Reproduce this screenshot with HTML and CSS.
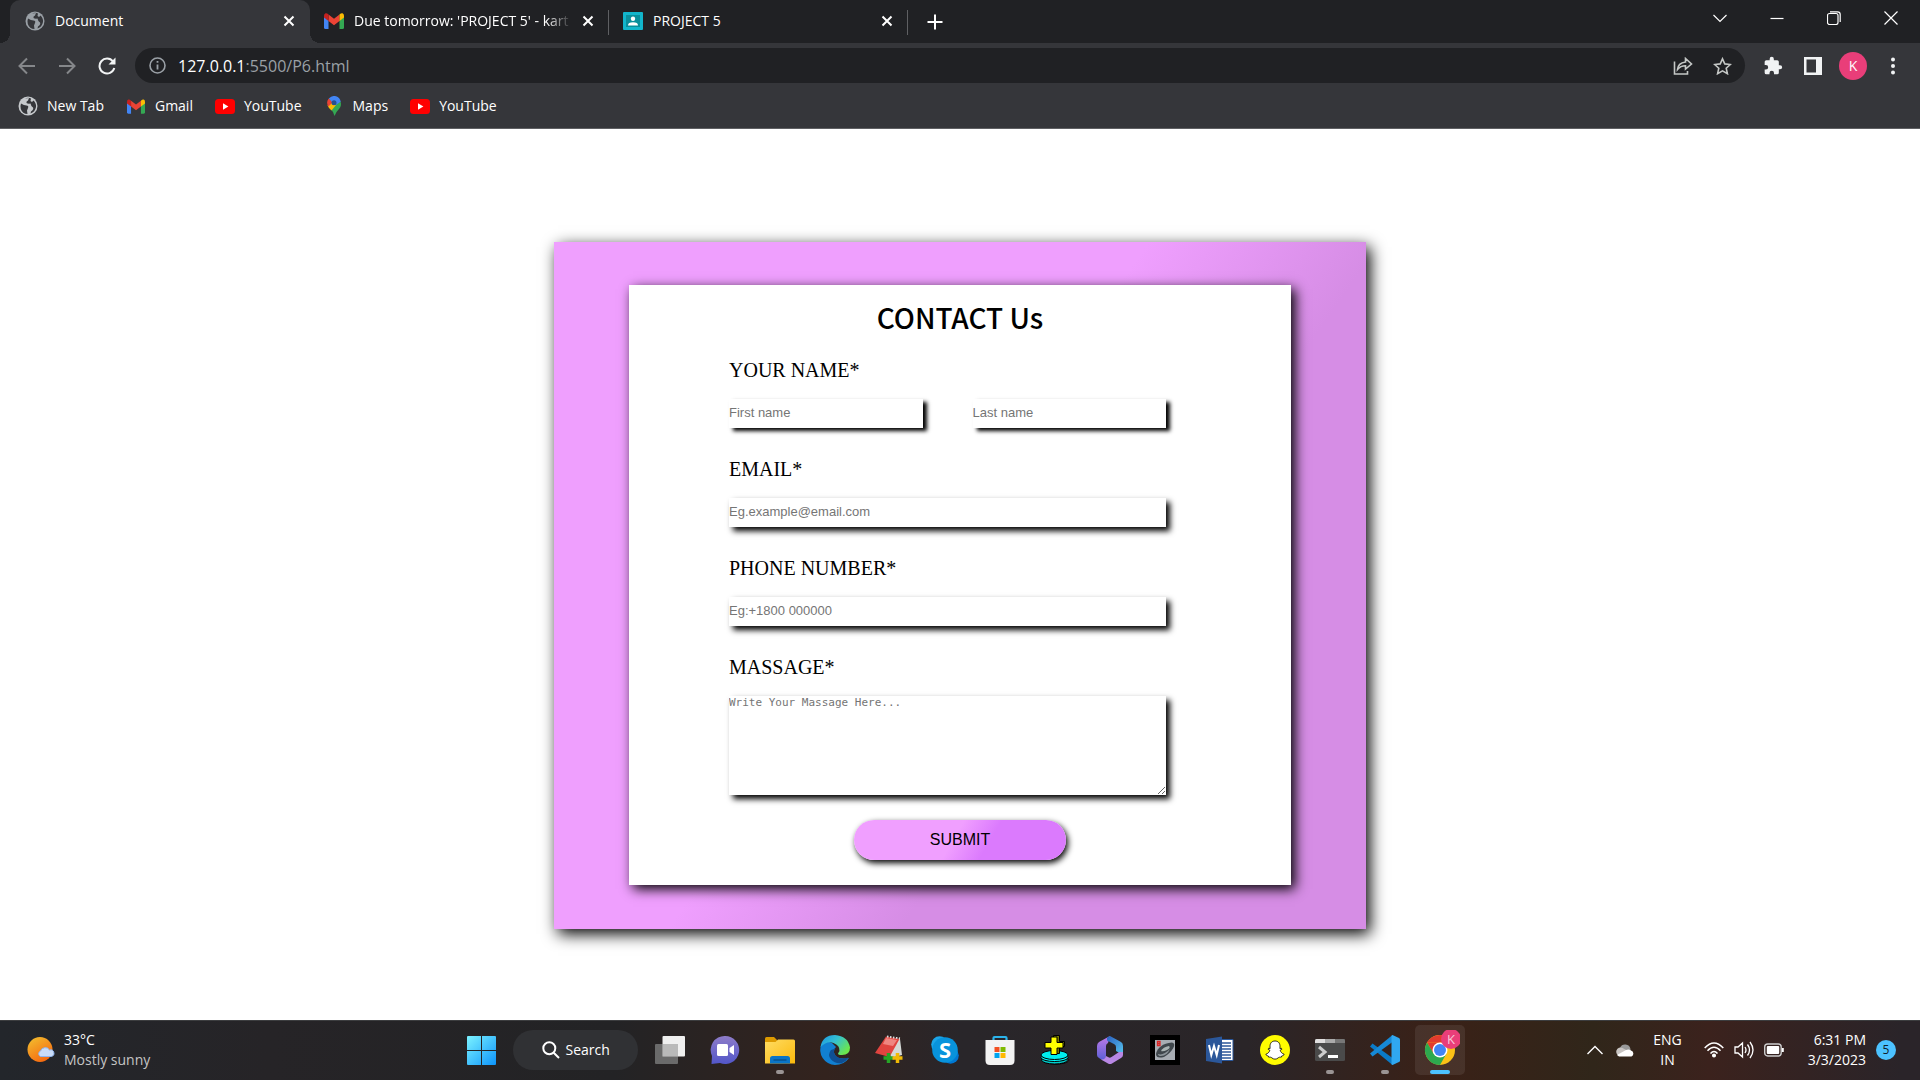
FILE: index.html
```html
<!DOCTYPE html>
<html lang="en">
<head>
<meta charset="utf-8">
<title>Document</title>
<link rel="stylesheet" href="styles.css">
</head>
<body>
<svg class="defs" width="0" height="0" aria-hidden="true">
  <defs>
    <symbol id="globe" viewBox="0 0 20 20"><circle cx="10" cy="10" r="9.500" fill="currentColor"/><path class="land" d="M3 7.500Q6 9.500 8.500 9.500Q11 9.500 10 12L9 14.500L9.500 18Q4.500 18 2.800 13Q2 10 3 7.500ZM7 2.500L11 2L10 4.500Q8 5 8.500 7Q10 8 12.500 7.500Q13 10.500 15 11.500Q16 13.500 13 15.500L12.500 17.500Q17 16 18 11Q18.500 7.500 15.500 4.500L14 6L12.500 5L13 2.500Q10 1 7 2.500Z"/></symbol>
    <symbol id="gmail" viewBox="0 0 20 16"><path fill="#4285f4" d="M0 3v11.500Q0 16 1.500 16H4.500V7z"/><path fill="#34a853" d="M15.500 7v9H18.500Q20 16 20 14.500V3z"/><path fill="#ea4335" d="M4.500 1.500L10 5.700L15.500 1.500V8L10 12.200L4.500 8z"/><path fill="#fbbc04" d="M15.500 1.500Q17 0 18.500 .3Q20 .8 20 3V4.600L15.500 8z"/><path fill="#c5221f" d="M4.500 1.500Q3 0 1.500 .3Q0 .8 0 3V4.600L4.500 8z"/></symbol>
    <symbol id="youtube" viewBox="0 0 20 15"><rect width="20" height="15" rx="3.500" fill="#f00"/><path fill="#fff" d="M8 4.300v6.400l5.400-3.200z"/></symbol>
    <symbol id="close" viewBox="0 0 12 12"><path d="M1.500 1.500l9 9M10.500 1.500l-9 9" stroke="currentColor" stroke-width="2" fill="none"/></symbol>
  </defs>
</svg>

<header class="browser">
  <div class="tabstrip">
    <div class="tab tab-active">
      <svg class="icon20 globe-dim"><use href="#globe"/></svg>
      <span class="tab-title">Document</span>
      <button class="tab-close" aria-label="Close tab"><svg width="12" height="12"><use href="#close"/></svg></button>
    </div>
    <div class="tab">
      <svg class="icon20" viewBox="0 0 20 20"><use href="#gmail" y="2" width="20" height="16"/></svg>
      <span class="tab-title tab-fade">Due tomorrow: 'PROJECT 5' - kart</span>
      <button class="tab-close" aria-label="Close tab"><svg width="12" height="12"><use href="#close"/></svg></button>
    </div>
    <div class="tab">
      <svg class="icon20" viewBox="0 0 20 20"><rect y="1" width="20" height="18" rx="1" fill="#12b5cb"/><rect x="3" y="4" width="14" height="12" fill="#0a8f9c"/><circle cx="10" cy="7.800" r="2.200" fill="#fff"/><path fill="#fff" d="M5 14.500q0-3.300 5-3.300t5 3.300z"/></svg>
      <span class="tab-title">PROJECT 5</span>
      <button class="tab-close" aria-label="Close tab"><svg width="12" height="12"><use href="#close"/></svg></button>
    </div>
    <button class="tab-new" aria-label="New tab"><svg width="16" height="16" viewBox="0 0 16 16"><path d="M8 .5v15M.5 8h15" stroke="#fff" stroke-width="2"/></svg></button>
    <div class="window-controls">
      <button aria-label="Search tabs"><svg width="14" height="14" viewBox="0 0 14 14"><path d="M.5 4l6.500 6.500L13.500 4"/></svg></button>
      <button aria-label="Minimize"><svg width="14" height="14" viewBox="0 0 14 14"><path d="M.5 7.500h13"/></svg></button>
      <button aria-label="Restore"><svg width="14" height="14" viewBox="0 0 14 14"><rect x=".5" y="2.500" width="10.500" height="11" rx="2"/><path d="M3 .8h7.500q2.700 0 2.700 2.700V11"/></svg></button>
      <button aria-label="Close window"><svg width="14" height="14" viewBox="0 0 14 14"><path d="M.5 .5l13 13M13.500 .5l-13 13"/></svg></button>
    </div>
  </div>

  <div class="toolbar">
    <button class="nav nav-off" aria-label="Back"><svg width="18" height="18" viewBox="0 0 18 18"><path d="M17 9H2M9 1.500L1.500 9L9 16.500"/></svg></button>
    <button class="nav nav-off" aria-label="Forward"><svg width="18" height="18" viewBox="0 0 18 18"><path d="M1 9h15M9 1.500L16.500 9L9 16.500"/></svg></button>
    <button class="nav" aria-label="Reload"><svg width="18" height="18" viewBox="0 0 18 18"><path d="M15 4.500A7.500 7.500 0 1 0 16.300 11"/><path d="M17.500 .5v7h-7z" fill="#f1f3f4" stroke="none"/></svg></button>
    <div class="omnibox">
      <svg width="17" height="17" viewBox="0 0 17 17"><circle cx="8.500" cy="8.500" r="7.500" fill="none" stroke="#9aa0a6" stroke-width="1.600"/><path d="M8.500 7.500v5M8.500 4v1.800" stroke="#9aa0a6" stroke-width="1.800"/></svg>
      <span class="url"><b>127.0.0.1</b>:5500/P6.html</span>
      <button aria-label="Share"><svg width="20" height="18" viewBox="0 0 20 18"><path d="M1.500 4.500v12.500h13v-3M4.500 12.500Q5 6 12.500 5V1.500L18.500 7L12.500 12V8.800Q7.500 8.800 4.500 12.500z"/></svg></button>
      <button aria-label="Bookmark"><svg width="19" height="18" viewBox="0 0 19 18"><path d="M9.500 1.800l2.300 5.100 5.500.6-4.100 3.700 1.200 5.500-4.900-2.800-4.900 2.800 1.200-5.500L1.700 7.500l5.500-.6z"/></svg></button>
    </div>
    <button class="tool" aria-label="Extensions"><svg width="20" height="20" viewBox="0 0 24 24"><path fill="#f1f3f4" d="M20.500 11H19V7a2 2 0 0 0-2-2h-4V3.500a2.500 2.500 0 0 0-5 0V5H4a2 2 0 0 0-2 2v3.800h1.500a2.700 2.700 0 0 1 0 5.400H2V20a2 2 0 0 0 2 2h3.800v-1.500a2.700 2.700 0 0 1 5.400 0V22H17a2 2 0 0 0 2-2v-4h1.500a2.500 2.500 0 0 0 0-5z"/></svg></button>
    <button class="tool" aria-label="Side panel"><svg width="18" height="18" viewBox="0 0 18 18"><path fill="#f1f3f4" fill-rule="evenodd" d="M0 0h18v18H0zM2.500 2.500v13H12v-13z"/></svg></button>
    <button class="tool avatar" aria-label="Profile">K</button>
    <button class="tool" aria-label="Menu"><svg width="4" height="18" viewBox="0 0 4 18" fill="#f1f3f4"><circle cx="2" cy="2.500" r="2"/><circle cx="2" cy="9" r="2"/><circle cx="2" cy="15.500" r="2"/></svg></button>
  </div>

  <nav class="bookmarks">
    <a href="#"><svg class="icon20 globe-bright"><use href="#globe"/></svg>New Tab</a>
    <a href="#"><svg class="icon20" viewBox="0 0 20 20"><use href="#gmail" x="1" y="3" width="18" height="15"/></svg>Gmail</a>
    <a href="#"><svg class="icon20" viewBox="0 0 20 20"><use href="#youtube" y="3" width="20" height="15"/></svg>YouTube</a>
    <a href="#"><svg class="icon20" viewBox="0 0 20 20"><path fill="#34a853" d="M16.500 5.500q1.500 4-1.500 7.500l-2.500 3-2 4-1.500-4L6 12.500z"/><path fill="#fbbc04" d="M3.500 9.500L8 5.500 12 9l-4.500 5.500Q4.500 12 3.500 9.500z"/><path fill="#ea4335" d="M4.800 2.500L9 6 4.200 10.700Q1.800 6 4.800 2.500z"/><path fill="#4285f4" d="M4.800 2.500Q8-.8 12 .2t4.700 5.500L12 9 8 6z"/><circle cx="10" cy="6.800" r="2.500" fill="#28518e"/></svg>Maps</a>
    <a href="#"><svg class="icon20" viewBox="0 0 20 20"><use href="#youtube" y="3" width="20" height="15"/></svg>YouTube</a>
  </nav>
</header>

<main class="page">
  <section class="card">
    <form class="contact">
      <h1>CONTACT Us</h1>
      <div class="fields">
        <div class="field">
          <label for="first">YOUR NAME*</label>
          <div class="pair">
            <input id="first" class="crisp" type="text" placeholder="First name">
            <input id="last" class="crisp" type="text" placeholder="Last name" aria-label="Last name">
          </div>
        </div>
        <div class="field">
          <label for="email">EMAIL*</label>
          <input id="email" type="email" placeholder="Eg.example@email.com">
        </div>
        <div class="field">
          <label for="phone">PHONE NUMBER*</label>
          <input id="phone" type="tel" placeholder="Eg:+1800 000000">
        </div>
        <div class="field">
          <label for="message">MASSAGE*</label>
          <textarea id="message" placeholder="Write Your Massage Here..."></textarea>
        </div>
      </div>
      <button class="submit" type="button">SUBMIT</button>
    </form>
  </section>
</main>

<footer class="taskbar">
  <div class="weather">
    <svg width="28" height="28" viewBox="0 0 28 28"><defs><linearGradient id="sun" x1="0" y1="0" x2=".6" y2="1"><stop offset="0" stop-color="#f2c230"/><stop offset="1" stop-color="#f56a10"/></linearGradient></defs><circle cx="13" cy="13.500" r="12.500" fill="url(#sun)"/><path fill="#c9dcf8" stroke="#8fb4ee" d="M13.500 20.500a3 3 0 0 1 0-5.500 5 5 0 0 1 9-1 3.300 3.300 0 1 1 2 6.500z"/></svg>
    <p>33°C<br><span>Mostly sunny</span></p>
  </div>

  <div class="apps">
    <button class="app" aria-label="Start"><svg width="30" height="30" viewBox="0 0 30 30"><defs><linearGradient id="win" x1="0" y1="0" x2="1" y2="1"><stop offset="0" stop-color="#7cf3ff"/><stop offset="1" stop-color="#0d94fb"/></linearGradient></defs><path fill="url(#win)" d="M1 2Q1 1 2 1H15V15H1zM16 1H29Q30 1 30 2V15H16zM1 16H15V30H2Q1 30 1 29zM16 16H30V29Q30 30 29 30H16z"/></svg></button>
    <button class="search"><svg width="18" height="18" viewBox="0 0 18 18" fill="none" stroke="#fff" stroke-width="2"><circle cx="7.300" cy="7.300" r="6"/><path d="M11.700 11.700L17 17"/></svg>Search</button>
    <button class="app" aria-label="Task view"><svg width="30" height="30" viewBox="0 0 30 30"><rect x="7.500" y="1" width="22.500" height="20.500" rx="1" fill="#efefef"/><rect y="9" width="23" height="20" rx="1" fill="#777" opacity=".85"/><path fill="#b9b9b9" d="M7.500 9H23v12.500H7.500z"/></svg></button>
    <button class="app" aria-label="Chat"><svg width="30" height="30" viewBox="0 0 30 30"><defs><linearGradient id="chat" x1="0" y1="0" x2="0" y2="1"><stop offset="0" stop-color="#8e7cc8"/><stop offset="1" stop-color="#5256c9"/></linearGradient></defs><path fill="url(#chat)" d="M15 1a14 14 0 1 1-5 27L1.500 29 2 21A14 14 0 0 1 15 1z"/><rect x="7" y="9" width="11" height="12" rx="1.500" fill="#fff"/><path fill="#fff" d="M19.500 13L24 10v10l-4.500-3z"/></svg></button>
    <button class="app running" aria-label="File Explorer"><svg width="30" height="30" viewBox="0 0 30 30"><defs><linearGradient id="folder" x1="0" y1="0" x2="1" y2="1"><stop offset="0" stop-color="#ffdc63"/><stop offset="1" stop-color="#fbb90c"/></linearGradient></defs><path fill="#dd9a00" d="M0 9V3.500Q0 2 1.500 2H9l3 3v4z"/><path fill="url(#folder)" d="M0 7h10.500l2.500-2.500H28.500Q30 4.500 30 6V28.500H0z"/><path fill="#0a75c7" d="M5 28.500v-5q0-2.500 2.500-2.500h15q2.500 0 2.500 2.500v5z"/><path d="M8.500 25h13" stroke="#064a84" stroke-width="1.200"/></svg></button>
    <button class="app" aria-label="Edge"><svg width="30" height="30" viewBox="0 0 30 30"><defs><linearGradient id="edgeA" x1="0" y1="0" x2="1" y2=".6"><stop offset=".1" stop-color="#1f9de2"/><stop offset=".5" stop-color="#35c1d0"/><stop offset="1" stop-color="#6be64d"/></linearGradient></defs><path fill="#1180d2" d="M1.500 9Q6 5 12 8l4 4q-4 3-1 8t14 3Q24 30 15 30A15 15 0 0 1 1.500 9z"/><path fill="#0e4f94" d="M11 15q-4 5 0 9.500t11 3.500q4-1.500 6.500-5.500-4 2-9 .5T14 17q0-2 1.500-3.500z"/><path fill="url(#edgeA)" d="M.5 12Q2.500 0 15 0 28 1 30 12.500q0 7.500-8 7.500-4 0-4-1.500l1.500-2.500q.5-5.500-6-8T.5 12z"/></svg></button>
    <button class="app" aria-label="Notes"><svg width="30" height="30" viewBox="0 0 30 30"><path fill="#d5d9d6" d="M11 3l14 1 2 16-11 3z"/><path fill="#e0443f" d="M11 1.500L24.500 4 14.500 22 0 18z"/><path fill="#ef8680" d="M11 3l11 2-4 6-10-2z"/><path d="M12 1.500l13 2" stroke="#ddd" stroke-width="2" stroke-dasharray="1.500 1.500"/><path d="M13.500 18v10M8.500 23h10" stroke="#26a526" stroke-width="3.500"/><path d="M22.500 18v10M17.500 23h10" stroke="#f0b905" stroke-width="3.500"/></svg></button>
    <button class="app" aria-label="Skype"><svg width="30" height="30" viewBox="0 0 30 30"><circle cx="9.500" cy="9.500" r="8.300" fill="#1ba5e8"/><circle cx="20.500" cy="20.500" r="8.300" fill="#0078d4"/><circle cx="15" cy="15" r="12.800" fill="#0893dc"/><text x="15" y="23" class="skype-s">S</text></svg></button>
    <button class="app" aria-label="Store"><svg width="30" height="30" viewBox="0 0 30 30"><path d="M8.500 6.500V3Q8.500 2 9.500 2h11q1 0 1 1v3.500" fill="none" stroke="#2bb4ec" stroke-width="2.200"/><path fill="#f3f3f3" d="M.5 5h29v20.500q0 4.500-4.500 4.500H5Q.5 30 .5 25.500z"/><path fill="#f25022" d="M9.500 12h5v5h-5z"/><path fill="#7fba00" d="M15.500 12h5v5h-5z"/><path fill="#00a4ef" d="M9.500 18h5v5h-5z"/><path fill="#ffb900" d="M15.500 18h5v5h-5z"/></svg></button>
    <button class="app" aria-label="Disk tool"><svg width="30" height="30" viewBox="0 0 30 30" stroke="#000"><ellipse cx="16" cy="25" rx="13" ry="4" fill="#888"/><ellipse cx="14.500" cy="25" rx="13" ry="4" fill="#0cc"/><ellipse cx="14.500" cy="22.500" rx="13.500" ry="4" fill="#0ff"/><ellipse cx="14.500" cy="20" rx="13.500" ry="4.500" fill="#0ee"/><path fill="#777800" d="M13.500 .5h6v6h5v5h-5v7h-6z"/><path fill="#ff0" d="M11 2h6v5.500h6V13h-6v6.500h-6V13H5V7.500h6z"/></svg></button>
    <button class="app" aria-label="Microsoft 365"><svg width="30" height="30" viewBox="0 0 30 30"><defs><linearGradient id="m1" x1="0" y1="0" x2="0" y2="1"><stop offset="0" stop-color="#c07be8"/><stop offset="1" stop-color="#5a5fd6"/></linearGradient><linearGradient id="m2" x1="0" y1="0" x2="1" y2="1"><stop offset="0" stop-color="#2a5fc0"/><stop offset="1" stop-color="#58c8f0"/></linearGradient></defs><path fill="url(#m1)" d="M15 1L4 7Q2 8.500 2 11v9q0 2 2 3l3 2q4 1 4-4V11q0-2 2-3z"/><path fill="url(#m2)" d="M12 2.500L15 1l11 6q2 1 2 4v9l-7-4v-4q0-2-2-3l-7-3.500z"/><path fill="#b887e4" d="M28 17v3q0 2-2 3l-9 5.500q-2 1-4 0L6 24.500q4 .5 5-3.500l3 1.500q1 .5 2.500-.5l7.500-5z"/></svg></button>
    <button class="app" aria-label="Mouse utility"><svg width="30" height="30" viewBox="0 0 30 30"><path d="M0 0h30v30H0z"/><path fill="#a7adb3" d="M5 5h20v20H5z"/><path fill="#3f474c" d="M6 19Q8 9 22 7.500q4 1 1 6t-9 8.500q-8 2-8-3z"/><path fill="#a9b3b3" d="M11 16q2-4 8-5 2 2-2 4t-6 1z"/><path fill="#8b9499" d="M8 19q5 2 12-5-3 7-9 7-3 0-3-2z"/><path fill="none" stroke="#d92626" stroke-width="1.300" d="M7.500 6.500h2.500v4H7.500zM7.500 8.500h2.500"/></svg></button>
    <button class="app" aria-label="Word"><svg width="30" height="30" viewBox="0 0 30 30"><path fill="#fff" stroke="#2b579a" d="M16 4.500h12v21H16z"/><path d="M17 8h9M17 11h9M17 14h9M17 17h9M17 20h9M17 23h9" stroke="#2b579a" stroke-width="1.500"/><path fill="#2b579a" d="M1 4l16-2.500v27L1 26z"/><path fill="none" stroke="#fff" stroke-width="2" d="M4 10l2.300 10L9 11l2.700 9L14 10"/></svg></button>
    <button class="app" aria-label="Snapchat"><svg width="30" height="30" viewBox="0 0 30 30"><circle cx="15" cy="15" r="15" fill="#fffc00"/><path fill="#fff" stroke="#000" stroke-width=".8" d="M15 6c3.500 0 5.200 2.500 5 6l-.1 1.500 1.600-.2.300 1-1.700 1c.7 2 2 3.300 4 3.900 0 1.300-1.400 1.500-2.300 1.700l-.5 1.300c-1.300-.1-2.300-.2-3.300.8-1.700 1.500-4.300 1.500-6 0-1-1-2-.9-3.300-.8l-.5-1.300c-.9-.2-2.300-.4-2.300-1.700 2-.6 3.300-1.900 4-3.900l-1.700-1 .3-1 1.600.2L10 12c-.2-3.500 1.500-6 5-6z"/></svg></button>
    <button class="app running" aria-label="Terminal"><svg width="30" height="30" viewBox="0 0 30 30"><path fill="#4a4a4a" d="M0 4h30v20.500q0 1.500-1.500 1.500h-27Q0 26 0 24.500z"/><path fill="#e0dede" d="M0 8V5.500Q0 4 1.500 4H10v4z"/><path fill="#aaa" d="M10 4h10v4H10z"/><path fill="#777" d="M20 4h8.500Q30 4 30 5.500V8H20z"/><path d="M4 12l6 5-6 5" fill="none" stroke="#ccc" stroke-width="3"/><path d="M13 21.500h10" stroke="#fff" stroke-width="3"/></svg></button>
    <button class="app running" aria-label="Visual Studio Code"><svg width="30" height="30" viewBox="0 0 30 30"><path fill="#0a7bc8" d="M2.500 8.500L22.500 23v7L0 11.500z"/><path fill="#1689d6" d="M2.500 21.500L22.500 7V0L0 18.500z"/><path fill="#30a8f0" d="M22.500 0L29 3q1 .5 1 1.500v21q0 1-1 1.500l-6.500 3q-1 0-1-1.500v-27Q21.500 0 22.500 0z"/></svg></button>
    <button class="app app-on" aria-label="Chrome"><svg width="40" height="40" viewBox="0 0 40 40"><circle cx="20" cy="20" r="15" fill="#fbc116"/><path fill="#e33b2e" d="M7 12.500a15 15 0 0 1 26 0H20z"/><path fill="#e33b2e" d="M7 12.500L13.500 24 20 12.500z"/><path fill="#2da94f" d="M7 12.500A15 15 0 0 0 20 35l6.500-11.500H13.500z"/><circle cx="20" cy="20" r="7.500" fill="#fff"/><circle cx="20" cy="20" r="6" fill="#4285f4"/><circle cx="31" cy="9" r="10" fill="#e93e79"/><text x="31" y="14" class="badge-k">K</text></svg></button>
  </div>

  <div class="tray">
    <button aria-label="Show hidden icons"><svg width="16" height="10" viewBox="0 0 16 10"><path d="M.5 9L8 1.500 15.500 9" fill="none" stroke="#fff" stroke-width="1.400"/></svg></button>
    <button aria-label="OneDrive"><svg width="20" height="14" viewBox="0 0 20 14"><path fill="#999" d="M5 5a5.500 5.500 0 0 1 10.500 1v5H5z"/><path fill="#c9c5c3" d="M4.500 13A4.300 4.300 0 1 1 7.500 5L15 9v4z"/><path fill="#fff" d="M4 13.500L2 12l9-5a4.500 4.500 0 0 1 5 .5 3.200 3.200 0 0 1 .5 6z"/></svg></button>
    <button class="lang">ENG<br>IN</button>
    <div class="status">
      <svg width="20" height="16" viewBox="0 0 20 16" fill="none" stroke="#fff" stroke-width="1.500"><path d="M.7 6Q10-4 19.300 6M3.500 8.800q6.500-7 13 0M6.500 11.500q3.500-3.800 7 0"/><circle cx="10" cy="13.500" r="1.300" fill="#fff"/></svg>
      <svg width="20" height="18" viewBox="0 0 20 18" fill="none" stroke="#fff" stroke-width="1.300"><path d="M1 6h3l4.500-4v14L4 12H1zM11 6q2 3 0 6M13.500 3.500q4 5.500 0 11M16 1q6 8 0 16"/></svg>
      <svg width="20" height="14" viewBox="0 0 20 14"><rect x=".7" y="1" width="16.500" height="12" rx="3" fill="none" stroke="#ccc" stroke-width="1.400"/><rect x="2.800" y="3" width="12.400" height="8" rx="1" fill="#fff"/><path d="M18.800 5v4" stroke="#fff" stroke-width="2"/></svg>
    </div>
    <button class="clock">6:31 PM<br>3/3/2023</button>
    <span class="count">5</span>
  </div>
</footer>
</body>
</html>
```

FILE: styles.css
```css
* { box-sizing: border-box; }

body {
  margin: 0;
  min-height: 100vh;
  display: flex;
  flex-direction: column;
  background: #fff;
  font-family: "Open Sans", "Noto Sans", sans-serif;
  font-size: 14px;
  line-height: 20px;
}

button {
  border: 0;
  padding: 0;
  background: none;
  color: inherit;
  font: inherit;
}

svg { display: block; flex: none; }
.defs { position: absolute; }
.icon20 { width: 20px; height: 20px; }

/* Browser window */
.browser {
  background: #35363a;
  color: #fff;
  border-bottom: 1px solid #5f6063;
}

.globe-dim { color: #9aa0a6; fill: #35363a; }
.globe-bright { color: #c6c9cc; fill: #35363a; }

.tabstrip {
  display: flex;
  align-items: stretch;
  height: 43px;
  padding-left: 10px;
  background: #202124;
}

.tab {
  position: relative;
  display: flex;
  align-items: center;
  gap: 10px;
  flex: 0 1 299px;
  min-width: 0;
  padding: 0 15px 2px 14px;
}

.tab-active {
  flex-basis: 300px;
  padding-left: 15px;
  background: #35363a;
  border-radius: 10px 10px 0 0;
}

.tab-active::before,
.tab-active::after {
  content: "";
  position: absolute;
  bottom: 0;
  width: 10px;
  height: 10px;
}
.tab-active::before { left: -10px; background: radial-gradient(circle at 0 0, transparent 10px, #35363a 10px); }
.tab-active::after { right: -10px; background: radial-gradient(circle at 100% 0, transparent 10px, #35363a 10px); }

.tab + .tab { background: linear-gradient(#5f6063, #5f6063) right 10px / 1px 25px no-repeat; }

.tab-title {
  flex: 1;
  min-width: 0;
  overflow: hidden;
  white-space: nowrap;
}
.tab-fade { -webkit-mask-image: linear-gradient(90deg, #000 88%, transparent); mask-image: linear-gradient(90deg, #000 88%, transparent); }

.tab-new { padding: 0 19px; }

.window-controls {
  display: flex;
  margin-left: auto;
  padding: 0 1px 7px 0;
}
.window-controls button {
  width: 57px;
  display: grid;
  place-items: center;
}
.window-controls svg { fill: none; stroke: #fff; stroke-width: 1.2; }

.toolbar {
  display: flex;
  align-items: center;
  height: 45px;
  padding: 0 7px;
}

.nav {
  width: 40px;
  height: 36px;
  display: grid;
  place-items: center;
}
.nav svg { fill: none; stroke: #f1f3f4; stroke-width: 2; }
.nav-off svg { stroke: #85878a; }

.omnibox {
  flex: 1;
  display: flex;
  align-items: center;
  height: 35px;
  margin: 0 8px;
  padding: 0 13px 0 14px;
  border-radius: 18px;
  background: #202124;
  font-size: 16px;
}
.omnibox button svg { fill: none; stroke: #c4c7c5; stroke-width: 1.6; }
.omnibox button + button { margin-left: 20px; }

.url { flex: 1; margin-left: 12px; color: #9aa0a6; }
.url b { font-weight: 400; color: #fff; }

.tool {
  width: 40px;
  height: 36px;
  display: grid;
  place-items: center;
}
.avatar {
  width: 28px;
  height: 28px;
  margin: 0 6px;
  border-radius: 50%;
  background: #e93e79;
}

.bookmarks {
  display: flex;
  gap: 22px;
  height: 40px;
  padding: 0 18px 4px;
}
.bookmarks a {
  display: flex;
  align-items: center;
  gap: 9px;
  color: #fff;
  text-decoration: none;
}

/* Contact form */
.page {
  flex: 1;
  display: flex;
  align-items: center;
  justify-content: center;
  padding-top: 22px;
}

.card {
  width: 812px;
  max-width: 100%;
  padding: 43px 75px 44px;
  background: linear-gradient(125deg, #ef9ffe 46%, #d68de5 64%);
  box-shadow: 4px 5px 15px #000;
}

.contact {
  display: flex;
  flex-direction: column;
  align-items: center;
  padding: 14px 0 25px;
  background: #fff;
  box-shadow: 4px 4px 12px #000;
}

.contact h1 {
  margin: 0 0 23px;
  font-family: "Noto Sans CJK JP", "Open Sans", sans-serif;
  font-size: 28px;
  font-weight: 500;
  line-height: 36px;
}

.fields {
  align-self: stretch;
  display: flex;
  flex-direction: column;
  gap: 29px;
  padding: 0 125px 0 100px;
}

.field {
  display: flex;
  flex-direction: column;
  gap: 17px;
}

.field label {
  font-family: "Liberation Serif", serif;
  font-size: 20px;
  line-height: 24px;
}

.pair {
  display: grid;
  grid-template-columns: 1fr 1fr;
  gap: 50px;
}

.field input,
.field textarea {
  width: 100%;
  border: 0;
  border-radius: 0;
  padding: 0;
  background: #fff;
  box-shadow: 4px 4px 6px #000;
}
.field input {
  height: 29px;
  padding-bottom: 2px;
  font-family: "Liberation Sans", sans-serif;
  font-size: 13px;
}
.field .crisp { box-shadow: 4px 3px 4px #000; }
.field textarea {
  display: block;
  height: 99px;
  font-family: "DejaVu Sans Mono", monospace;
  font-size: 11px;
  line-height: 14px;
}
::placeholder { color: #757575; }

.submit {
  width: 212px;
  height: 40px;
  margin-top: 25px;
  border-radius: 20px;
  background: linear-gradient(120deg, #f09fff 47%, #db7afd 63%);
  box-shadow: 2px 3px 6px #000;
  color: #000;
  font-family: "Liberation Sans", sans-serif;
  font-size: 16px;
}

/* Taskbar */
.taskbar {
  display: grid;
  grid-template-columns: 1fr auto 1fr;
  align-items: center;
  height: 60px;
  padding-bottom: 2px;
  border-top: 1px solid #3c3d3f;
  background: linear-gradient(90deg, #23262b, #262427 14%, #232325 32%, #33231e 43%, #29262a 50%, #2a2528 65%, #3a2117 75%, #30261a 83%, #3b221d 89%, #2a2429 99%);
  color: #fff;
}

.weather {
  display: flex;
  align-items: center;
  gap: 9px;
  padding-left: 27px;
}
.weather p { margin: 0; }
.weather span { color: #c4c4c4; }

.apps { display: flex; align-items: center; gap: 5px; }

.app {
  position: relative;
  display: grid;
  place-items: center;
  width: 50px;
  height: 50px;
  border-radius: 5px;
}
.app-on { background: rgba(255, 255, 255, .08); }
.app-on svg { margin: -5px; }

.running::after,
.app-on::after {
  content: "";
  position: absolute;
  left: 21px;
  bottom: 1px;
  width: 8px;
  height: 4px;
  border-radius: 2px;
  background: #9a9494;
}
.app-on::after { left: 15px; width: 20px; background: #4cc2ff; }

.skype-s { fill: #fff; font-size: 22px; font-weight: 700; text-anchor: middle; }
.badge-k { fill: #f8c8d8; font-size: 13px; text-anchor: middle; }

.search {
  display: flex;
  align-items: center;
  gap: 6px;
  width: 125px;
  height: 40px;
  margin: 0 2px;
  padding-left: 29px;
  border-radius: 20px;
  background: #303134;
}

.tray {
  display: flex;
  align-items: center;
  justify-content: flex-end;
  padding-right: 24px;
}
.tray button { flex: none; }
.tray button + button { margin-left: 12px; }
.tray .lang { margin-left: 18px; text-align: center; }
.status { display: flex; align-items: center; gap: 10px; margin: 0 24px 0 22px; }
.clock { text-align: right; }
.count {
  width: 20px;
  height: 20px;
  margin-left: 10px;
  border-radius: 50%;
  background: #4cc2ff;
  color: #10202b;
  font-size: 12px;
  text-align: center;
}
```
